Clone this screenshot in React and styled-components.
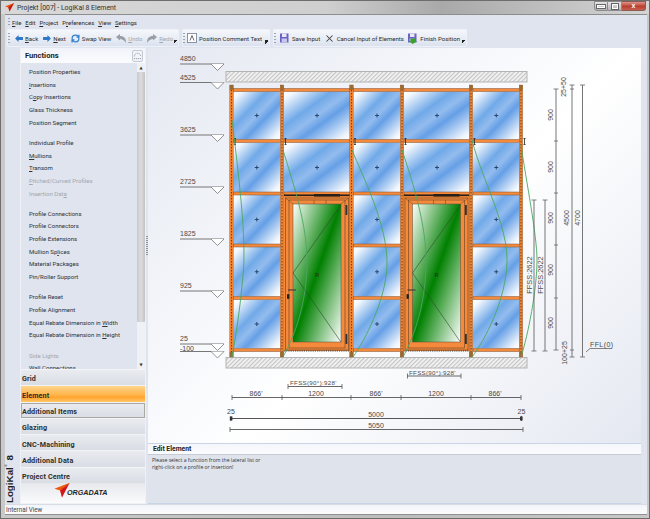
import React from "react";
import styled, { createGlobalStyle } from "styled-components";
import { RefreshCw, X } from "lucide-react";

const Global = createGlobalStyle`
  html, body { margin: 0; padding: 0; overflow: hidden; }
  body { font-family: Roboto, "Liberation Sans", sans-serif; color: #2c2c2c; }
`;

// "&" marks the mnemonic letter, it comes out underlined
function Mn({ text }) {
  const i = text.indexOf("&");
  if (i < 0) return <span>{text}</span>;
  return (
    <span>
      {text.slice(0, i)}
      <u>{text[i + 1]}</u>
      {text.slice(i + 2)}
    </span>
  );
}

const groups = [
  [["Position Properties"], ["&Insertions"], ["C&opy Insertions"], ["Glass Thickness"], ["Position Segment"]],
  [["Individual Profile"], ["&Mullions"], ["&Transom"], ["&Pitched/Curved Profiles", true], ["Insertion Dat&a", true]],
  [["Profile Connections"], ["Profile Connectors"], ["Profile Extensions"], ["Mullion Sp&lices"], ["Material Packages"], ["Pin/Roller Support"]],
  [["Profile Reset"], ["Profile Alignment"], ["Equal Rebate Dimension in &Width"], ["Equal Rebate Dimension in &Height"]],
  [["Side Lights", true], ["Wall Connections"]],
];

const navItems = ["Grid", "Element", "Additional Items", "Glazing", "CNC-Machining", "Additional Data", "Project Centre"];

export default function App() {
  return (
    <Window>
      <Global />
      <TitleBar>
        <svg width="9" height="9" viewBox="0 0 16 16">
          <polygon points="16,0 0,6 6,8 8,15" fill="#e8500f" />
          <polygon points="16,0 6,8 8,15" fill="#c81414" />
        </svg>
        <TitleText>Projekt [007] - LogiKal 8 Element</TitleText>
        <WinControls>
          <WinBtn><i /></WinBtn>
          <WinBtn $max><i /></WinBtn>
          <CloseBtn>x</CloseBtn>
        </WinControls>
      </TitleBar>

      <Client>
        <MenuBar>
          <Grip />
          {["&File", "&Edit", "&Project", "P&references", "&View", "&Settings"].map((m) => (
            <MenuItem key={m}><Mn text={m} /></MenuItem>
          ))}
        </MenuBar>

        <ToolRow>
          <ToolGroup $w={172} $pad={8} $gap={5}>
            <Tool><ArrowIcon /><Mn text="&Back" /></Tool>
            <Tool><ArrowIcon $right /><Mn text="&Next" /></Tool>
            <Tool><RefreshCw size={9} color="#2f7fd0" strokeWidth={3.4} />Swap View</Tool>
            <Tool $off><UndoIcon /><Mn text="&Undo" /></Tool>
            <Tool $off><UndoIcon $flip /><Mn text="&Redo" /></Tool>
            <More />
          </ToolGroup>
          <ToolGroup $w={88} $pad={5} $gap={5}>
            <Tool>
              <svg width="10" height="10" viewBox="0 0 10 10">
                <rect x="0.5" y="0.5" width="9" height="9" fill="#fff" stroke="#8a93a3" />
                <path d="M3 7.5 L5 2.5 L7 7.5" fill="none" stroke="#667" />
              </svg>
              Position Comment Text
            </Tool>
            <More />
          </ToolGroup>
          <ToolGroup $w={194} $pad={6} $gap={3.5}>
            <Tool><DiskIcon />Save Input</Tool>
            <Tool><X size={11} color="#444" strokeWidth={2.2} />Cancel Input of Elements</Tool>
            <Tool><DiskIcon $finish />Finish Position</Tool>
            <More />
          </ToolGroup>
        </ToolRow>

        <Body>
          <Strip>
            <StripLabel>LogiKal<sup>®</sup> 8</StripLabel>
          </Strip>

          <SidePanel>
            <PanelHead>
              Functions
              <HeadBtn>
                <svg width="9" height="9" viewBox="0 0 10 10">
                  <path d="M1.5 6 A3.5 3.5 0 0 1 8.5 6 M1 8.5 H9" fill="none" stroke="#8c95a5" strokeDasharray="1.4 .8" />
                </svg>
              </HeadBtn>
            </PanelHead>
            <ListArea>
              <FuncList>
                {groups.map((g, i) => (
                  <FuncGroup key={i}>
                    {g.map(([label, off]) => (
                      <FuncItem key={label} $off={off}><Mn text={label} /></FuncItem>
                    ))}
                  </FuncGroup>
                ))}
              </FuncList>
              <ScrollBar>
                <ScrollArrow>▲</ScrollArrow>
                <ScrollThumb />
                <ScrollArrow>▼</ScrollArrow>
              </ScrollBar>
            </ListArea>
            <NavList>
              {navItems.map((n) => (
                <NavButton key={n} $active={n === "Element"} $hover={n === "Additional Items"}>{n}</NavButton>
              ))}
            </NavList>
            <LogoBox>
              <svg width="17" height="15" viewBox="0 0 17 16">
                <polygon points="0,6 16,0 10,5" fill="#f08a12" />
                <polygon points="16,0 10,5 8,15 6,8 0,6" fill="#ea5a10" />
                <polygon points="16,0 6,8 8,15.5" fill="#d6141c" />
              </svg>
              <LogoText>ORGADATA</LogoText>
            </LogoBox>
          </SidePanel>

          <Splitter><SplitGrip /></Splitter>

          <MainCol>
            <Canvas><Drawing /></Canvas>
            <EditPanel>
              <EditHead>Edit Element</EditHead>
              <EditBody>
                Please select a function from the lateral list or
                <br />
                right-click on a profile or insertion!
              </EditBody>
            </EditPanel>
          </MainCol>
        </Body>

        <StatusBar>Internal View</StatusBar>
      </Client>
    </Window>
  );
}

/* ---------- toolbar icons ---------- */

function ArrowIcon({ $right }) {
  return (
    <svg width="8" height="7" viewBox="0 0 9 8" style={{ transform: $right ? "scaleX(-1)" : "none" }}>
      <polygon points="0,4 4,0 4,2.2 9,2.2 9,5.8 4,5.8 4,8" fill="#2e78c8" />
    </svg>
  );
}

function UndoIcon({ $flip }) {
  return (
    <svg width="10" height="9" viewBox="0 0 10 9" style={{ transform: $flip ? "scaleX(-1)" : "none" }}>
      <path d="M0 3 L4 0 L4 2 C8 2 10 4 10 9 C8 6 6 5 4 5 L4 6.5 Z" fill="#9a9ea6" />
    </svg>
  );
}

function DiskIcon({ $finish }) {
  return (
    <svg width="11" height="11" viewBox="0 0 11 11">
      <rect x="1" y="0.5" width="8.5" height="9" fill="#6a62c4" />
      <rect x="3" y="0.5" width="4.5" height="3.5" fill="#e8e8f4" />
      <rect x="2.6" y="5.5" width="5.4" height="4" fill="#c9c6ec" />
      {$finish && <polygon points="3.5,5.5 8,5.5 8,8 10,8 5.8,11 1.5,8 3.5,8" fill="#3aa12e" />}
    </svg>
  );
}

/* ---------- the element drawing ---------- */

const mullX = [231.5, 282, 351.5, 402, 471, 521];
const tranY = [90, 141, 193.5, 245.5, 298, 350];
const labelFill = "#4a4a4a";

function Glass({ x, y, w, h }) {
  return (
    <g>
      <rect x={x} y={y} width={w} height={h} fill="url(#blueGlass)" />
      <path d={`M${x + w / 2 - 2} ${y + h / 2} h4 M${x + w / 2} ${y + h / 2 - 2} v4`} stroke="#1e3d66" strokeWidth="0.9" />
    </g>
  );
}

function Door({ x }) {
  const gx = x + 9;
  const gw = 48;
  return (
    <g>
      <rect x={x} y={195} width={66} height={156} fill="#f58a3c" />
      <rect x={x} y={194.5} width={66} height={1.6} fill="#2a2018" />
      <rect x={x + 1.5} y={198} width={63} height={152} fill="none" stroke="#7a4a26" strokeWidth="0.7" />
      <rect x={x + 5} y={200} width={56} height={148} fill="none" stroke="#7a4a26" strokeWidth="0.7" />
      <path d={`M${x + 1.5} 198 L${gx} 204 M${x + 64.5} 198 L${gx + gw} 204 M${x + 30} 200 v4 M${x + 42} 200 v4`} stroke="#7a4a26" strokeWidth="0.6" />
      <rect x={x + 30} y={194} width={26} height={2.6} fill="#2a2018" />
      <rect x={gx} y={204} width={gw} height={138} fill="url(#greenGlass)" stroke="#5b4a38" strokeWidth="0.5" />
      <path d={`M${gx + gw} 205 L${gx} 273 L${gx + gw} 342`} fill="none" stroke="#2f4a2f" strokeWidth="0.6" />
      <text x={gx + 24} y={277} fontSize="5.5" fontWeight="700" textAnchor="middle" fill="#1e3d1e">R</text>
      <path d={`M${x + 4} 290 h8`} stroke="#333" strokeWidth="1" />
      <rect x={x + 3} y={294} width={2.4} height={5} rx="1" fill="#222" />
      <rect x={x + 61.5} y={205} width={1.8} height={10} fill="#333" />
      <rect x={x + 61.5} y={334} width={1.8} height={10} fill="#333" />
      <path d={`M${x} 351 h66`} stroke="#222" strokeWidth="0.8" strokeDasharray="1.2 1" />
    </g>
  );
}

function Level({ y, label, dy = 3 }) {
  return (
    <g>
      <text x="180" y={y - dy} fontSize="7" fill={labelFill}>{label}</text>
      <path d={`M180 ${y} H224`} stroke="#777" strokeWidth="1.2" />
      <path d={`M211 ${y} L217.5 ${y + 6.5} L224 ${y}`} fill="#fff" stroke="#666" strokeWidth="0.7" />
    </g>
  );
}

function VDim({ x, y1, y2, ticks = [] }) {
  return (
    <g stroke="#666">
      <path d={`M${x} ${y1} V${y2}`} strokeWidth="0.9" />
      <path d={`M${x - 2.5} ${y1} h5 M${x - 2.5} ${y2} h5`} strokeWidth="0.8" />
      {ticks.map((t) => <path key={t} d={`M${x - 2} ${t} h4`} strokeWidth="0.8" />)}
    </g>
  );
}

function VText({ x, y, children, size = 7 }) {
  return (
    <text x={x} y={y} fontSize={size} fill={labelFill} textAnchor="middle" transform={`rotate(-90 ${x} ${y})`}>
      {children}
    </text>
  );
}

function HDim({ y, x1, x2, ticks = [], w = 0.9 }) {
  return (
    <g stroke="#555">
      <path d={`M${x1} ${y} H${x2}`} strokeWidth={w} />
      {[x1, x2, ...ticks].map((t) => <path key={t} d={`M${t} ${y - 2.5} v5`} strokeWidth="0.8" />)}
    </g>
  );
}

function HText({ x, y, children, anchor = "middle" }) {
  return <text x={x} y={y} fontSize="7" fill={labelFill} textAnchor={anchor}>{children}</text>;
}

const swings = [
  "M232 120 C238 170 247 240 243 275 C240 310 236 335 232 357",
  "M283 150 C292 180 308 225 307 265 C306 310 292 340 283 357",
  "M352 150 C362 175 388 225 387 265 C386 300 365 340 353 357",
  "M402 150 C412 180 427 225 426 265 C425 310 412 340 403 357",
  "M472 140 C482 180 508 225 507 262 C506 300 485 340 472 357",
  "M521 145 C526 180 537 235 537 260 C537 290 528 335 521 357",
];

function Drawing() {
  const colX = [
    [233.5, 46.5],
    [284, 66],
    [353.5, 47],
    [404, 66],
    [473, 46.5],
  ];
  return (
    <svg width="493" height="394" viewBox="148 48 493 394" style={{ display: "block" }} fontFamily="'Liberation Sans', sans-serif">
      <defs>
        <linearGradient id="blueGlass" x1="0" y1="0" x2="1" y2="1">
          <stop offset="0" stopColor="#ffffff" />
          <stop offset="0.08" stopColor="#f4f8fd" />
          <stop offset="0.36" stopColor="#70a9e8" />
          <stop offset="0.5" stopColor="#93bcee" />
          <stop offset="0.62" stopColor="#659fe6" />
          <stop offset="0.92" stopColor="#f0f6fd" />
          <stop offset="1" stopColor="#ffffff" />
        </linearGradient>
        <linearGradient id="greenGlass" x1="0" y1="0" x2="1" y2="1">
          <stop offset="0" stopColor="#ffffff" />
          <stop offset="0.5" stopColor="#008000" />
          <stop offset="1" stopColor="#ffffff" />
        </linearGradient>
        <pattern id="hatch" width="3" height="3" patternUnits="userSpaceOnUse" patternTransform="rotate(45)">
          <rect width="3" height="3" fill="#f4f4f4" />
          <rect width="1.2" height="3" fill="#c4c4c4" />
        </pattern>
      </defs>

      <rect x="226" y="71.5" width="301" height="10.5" fill="url(#hatch)" stroke="#b4b4b4" />
      <rect x="226" y="357.5" width="301" height="10.5" fill="url(#hatch)" stroke="#b4b4b4" />

      {colX.map(([x, w], c) =>
        [[91.5, 48], [143, 49], [195, 49], [247, 49.5], [300, 48]].map(([y, h], r) =>
          (c === 1 || c === 3) && r > 1 ? null : <Glass key={`${c}-${r}`} x={x} y={y} w={w} h={h} />
        )
      )}

      {tranY.map((y) =>
        [[233, 280.5], [284, 350], [353, 400.5], [404, 469.5], [473, 519.5]].map(([a, b], i) =>
          (i === 1 || i === 3) && y > 200 ? null : (
            <rect key={`${y}-${i}`} x={a} y={y - 1.5} width={b - a} height={3} fill="#f58a3c" stroke="#7a5236" strokeWidth="0.5" />
          )
        )
      )}

      <Door x={284} />
      <Door x={403.5} />

      {mullX.map((x) => (
        <g key={x}>
          <rect x={x - 1.7} y="85" width="3.4" height="272" fill="#f0832f" stroke="#7a5236" strokeWidth="0.4" />
          <rect x={x - 1.7} y="85" width="3.4" height="5" fill="#9a6a30" />
          <rect x={x - 1.7} y="352" width="3.4" height="5" fill="#9a6a30" />
          <path d={`M${x} 90 V352`} stroke="#4a3020" strokeWidth="0.8" strokeDasharray="1.4 1.6" />
          <path d={`M${x + 3.5} 138.5 v6 M${x + 2.5} 138.5 h2 M${x + 2.5} 144.5 h2`} stroke="#222" strokeWidth="0.8" />
        </g>
      ))}

      {swings.map((d) => (
        <path key={d} d={d} fill="none" stroke="#4aa862" strokeWidth="0.9" />
      ))}

      <Level y={64} label="4850" />
      <Level y={82.5} label="4525" />
      <Level y={135} label="3625" />
      <Level y={187} label="2725" />
      <Level y={239} label="1825" />
      <Level y={291} label="925" />
      <Level y={344} label="25" />
      <Level y={351.5} label="" />
      <HText x={180} y={350.5} anchor="start">-100</HText>

      <VDim x={534} y1={200} y2={351} />
      <VDim x={545} y1={200} y2={351} />
      <VDim x={556} y1={89} y2={350} ticks={[141, 193, 245, 298]} />
      <VDim x={572} y1={85} y2={357} ticks={[89, 350]} />
      <VDim x={582.5} y1={85} y2={357} />

      <VText x={566} y={87}>25+50</VText>
      {[115, 167, 218, 270, 323].map((y) => <VText key={y} x={553} y={y}>900</VText>)}
      <VText x={569} y={218}>4500</VText>
      <VText x={580} y={218}>4700</VText>
      <VText x={532} y={275} size={7.4}>FFSS:2622</VText>
      <VText x={543} y={275} size={7.4}>FFSS:2622</VText>
      <VText x={567} y={353}>100+25</VText>

      <text x="590" y="347" fontSize="7" fill={labelFill} letterSpacing="0.4">FFL(0)</text>
      <path d="M586 352 L590 348.5 H612" fill="none" stroke="#666" strokeWidth="0.8" />

      <HDim y={386.5} x1={288} x2={342} />
      <text x="290" y="385" fontSize="6.2" fill={labelFill} letterSpacing="0.3">FFSS(90°):928'</text>
      <HDim y={376} x1={407.5} x2={461} />
      <text x="409" y="374.5" fontSize="6.2" fill={labelFill} letterSpacing="0.3">FFSS(90°):928'</text>

      <HDim y={397.5} x1={232} x2={521} ticks={[282, 351, 401, 471]} />
      <HText x={256} y={396}>866'</HText>
      <HText x={316} y={396}>1200</HText>
      <HText x={376} y={396}>866'</HText>
      <HText x={436} y={396}>1200</HText>
      <HText x={495} y={396}>866'</HText>

      <HDim y={418.5} x1={231} x2={521.5} w={1.1} />
      <rect x="229.8" y="416.5" width="2.6" height="4" fill="#333" />
      <rect x="520" y="416.5" width="2.6" height="4" fill="#333" />
      <HText x={231} y={414}>25</HText>
      <HText x={521.5} y={414}>25</HText>
      <HText x={376} y={417}>5000</HText>
      <HDim y={429.5} x1={230} x2={523} />
      <HText x={376} y={428}>5050</HText>
    </svg>
  );
}

/* ---------- styles ---------- */

const Window = styled.div`
  width: 650px;
  height: 519px;
  display: flex;
  flex-direction: column;
  box-sizing: border-box;
  border: 1px solid #6d6d6d;
  padding: 0 2px 3px 4px;
  background: linear-gradient(90deg, #c9c9c9 0, #bdbdbd 60%, #c8c8c8 100%);
  overflow: hidden;
`;

const TitleBar = styled.div`
  height: 13px;
  flex: none;
  display: flex;
  align-items: center;
  gap: 3px;
  box-sizing: border-box;
  background: linear-gradient(90deg, #d8d8d8 0, #cfcfcf 50%, #a9a9a9 68%, #d4d4d4 100%);
  margin: 0 -2px 0 -4px;
  padding-left: 4px;
`;

const TitleText = styled.span`
  font-size: 6.9px;
  color: #303030;
`;

const WinControls = styled.div`
  margin-left: auto;
  margin-right: 3px;
  margin-top: -3px;
  display: flex;
  height: 10px;
`;

const WinBtn = styled.div`
  width: 14px;
  height: 10px;
  box-sizing: border-box;
  border: 1px solid #8a8a8a;
  border-left-width: 0;
  background: linear-gradient(#e6e6e6, #b5b5b5);
  display: flex;
  align-items: center;
  justify-content: center;
  &:first-child { border-left-width: 1px; border-radius: 0 0 0 3px; }
  i {
    display: block;
    width: ${(p) => (p.$max ? "4px" : "6px")};
    height: ${(p) => (p.$max ? "3px" : "1px")};
    border: 1px solid #fff;
    outline: 1px solid #666;
  }
`;

const CloseBtn = styled.div`
  width: 24px;
  height: 10px;
  box-sizing: border-box;
  border: 1px solid #8a5a55;
  border-left-width: 0;
  border-radius: 0 0 3px 0;
  background: linear-gradient(#e0938a, #b8402f 55%, #c8604f);
  color: #fff;
  font: 700 7px/8px "Liberation Sans", sans-serif;
  text-align: center;
`;

const Client = styled.div`
  flex: 1;
  min-height: 0;
  display: flex;
  flex-direction: column;
  background: #dfe4ee;
  border-top: 1px solid #8d8d8d;
`;

const MenuBar = styled.div`
  height: 14px;
  flex: none;
  display: flex;
  align-items: center;
  padding-left: 3px;
`;

const Grip = styled.div`
  width: 2px;
  height: 9px;
  margin-right: 2px;
  background: repeating-linear-gradient(#9aa3b4 0 1px, transparent 1px 3px);
`;

const MenuItem = styled.span`
  font-size: 6px;
  margin-right: 3.9px;
  color: #2a2a2a;
`;

const ToolRow = styled.div`
  height: 19px;
  flex: none;
  display: flex;
  gap: 3px;
  padding-left: 2px;
`;

const ToolGroup = styled.div`
  position: relative;
  width: ${(p) => p.$w}px;
  height: 18px;
  box-sizing: border-box;
  display: flex;
  align-items: center;
  gap: ${(p) => p.$gap}px;
  padding-left: ${(p) => p.$pad}px;
  border-radius: 2px;
  background: linear-gradient(#f6f8fc, #e6ebf4 60%, #d9e0ed);
  box-shadow: inset 0 0 0 1px #eef1f7;
  &::before {
    content: "";
    position: absolute;
    left: 1px;
    top: 4px;
    width: 2px;
    height: 10px;
    background: repeating-linear-gradient(#9aa3b4 0 1px, transparent 1px 3px);
  }
`;

const Tool = styled.span`
  display: inline-flex;
  align-items: center;
  gap: 2px;
  font-size: 6.05px;
  white-space: nowrap;
  color: ${(p) => (p.$off ? "#a3a7ae" : "#2c2c2c")};
`;

const More = styled.span`
  position: absolute;
  right: 2px;
  bottom: 3px;
  width: 3px;
  height: 3px;
  border-top: 1px solid #222;
  background: linear-gradient(135deg, #222 50%, transparent 50%);
`;

const Body = styled.div`
  flex: 1;
  min-height: 0;
  display: flex;
`;

const Strip = styled.div`
  width: 15px;
  flex: none;
  display: flex;
  align-items: flex-end;
  padding-bottom: 1px;
`;

const StripLabel = styled.div`
  writing-mode: vertical-rl;
  transform: rotate(180deg);
  font: 700 9.8px/10px "Liberation Sans", sans-serif;
  color: #1d1d1d;
  white-space: nowrap;
  sup { font-size: 3.5px; line-height: 0; }
`;

const SidePanel = styled.div`
  width: 126px;
  flex: none;
  display: flex;
  flex-direction: column;
  border: 1px solid #eef1f6;
  border-width: 0 1px 1px 1px;
  box-sizing: border-box;
`;

const PanelHead = styled.div`
  height: 15px;
  flex: none;
  display: flex;
  align-items: center;
  justify-content: space-between;
  padding: 0 2px 0 4px;
  font-size: 7.6px;
  font-weight: 700;
  color: #1c1c1c;
  background: linear-gradient(#f0f3f9, #fbfcfe);
`;

const HeadBtn = styled.div`
  width: 11px;
  height: 12px;
  box-sizing: border-box;
  border: 1px solid #c2c9d5;
  border-radius: 2px;
  background: #f2f4f8;
  display: flex;
  align-items: center;
  justify-content: center;
`;

const ListArea = styled.div`
  flex: 1;
  min-height: 0;
  display: flex;
  overflow: hidden;
  background: #dfe4ee;
`;

const FuncList = styled.div`
  flex: 1;
  overflow: hidden;
  padding: 3px 0 0 8px;
  display: flex;
  flex-direction: column;
  gap: 7.6px;
`;

const FuncGroup = styled.div`
  display: flex;
  flex-direction: column;
`;

const FuncItem = styled.div`
  height: 12.67px;
  line-height: 12.67px;
  font-size: 6.05px;
  white-space: nowrap;
  color: ${(p) => (p.$off ? "#a2a7b0" : "#2f3238")};
`;

const ScrollBar = styled.div`
  width: 8px;
  flex: none;
  display: flex;
  flex-direction: column;
  background: #eef1f6;
`;

const ScrollArrow = styled.div`
  height: 9px;
  font: 4px/9px "DejaVu Sans", sans-serif;
  text-align: center;
  color: #333;
`;

const ScrollThumb = styled.div`
  height: 250px;
  margin-bottom: auto;
  background: linear-gradient(90deg, #c9c9c9, #dddddd 50%, #c2c2c2);
  border-radius: 1px;
`;

const NavList = styled.div`
  flex: none;
  display: flex;
  flex-direction: column;
`;

const NavButton = styled.div`
  height: 16.3px;
  box-sizing: border-box;
  padding: 2.5px 0 0 1px;
  line-height: 13px;
  font-size: 7.2px;
  font-weight: 700;
  letter-spacing: 0.12px;
  color: #2e2e2e;
  border-top: 1px solid #f2f4f8;
  background: ${(p) =>
    p.$active
      ? "linear-gradient(#ffd58c, #ffb54c 55%, #ffa42e 70%, #ffc868)"
      : "linear-gradient(#e9ebef, #d9dde4)"};
  ${(p) => p.$hover && "box-shadow: inset 0 0 0 1px #a9a9a2;"}
`;

const LogoBox = styled.div`
  height: 20px;
  flex: none;
  display: flex;
  align-items: flex-start;
  padding-left: 33px;
  background: linear-gradient(#e6e8ec, #fbfbfc);
`;

const LogoText = styled.span`
  margin: 5px 0 0 -4px;
  font: italic 700 7.2px "Liberation Sans", sans-serif;
  color: #1f1f1f;
`;

const Splitter = styled.div`
  width: 2px;
  flex: none;
  display: flex;
  align-items: center;
  padding-bottom: 60px;
  box-sizing: border-box;
`;

const SplitGrip = styled.div`
  width: 2px;
  height: 20px;
  background: repeating-linear-gradient(#8c95a5 0 1px, transparent 1px 2px);
`;

const MainCol = styled.div`
  width: 493px;
  flex: none;
  display: flex;
  flex-direction: column;
`;

const Canvas = styled.div`
  height: 395px;
  flex: none;
  background: linear-gradient(135deg, #e4e8f1 0, #fbfcfe 48%, #ffffff 55%, #e4e8f1 100%);
`;

const EditPanel = styled.div`
  flex: 1;
  display: flex;
  flex-direction: column;
  border-top: 1px solid #c9d4e8;
`;

const EditHead = styled.div`
  height: 10px;
  flex: none;
  line-height: 10px;
  padding-left: 5px;
  font-size: 6.8px;
  font-weight: 700;
  background: linear-gradient(#f4f6fa, #fbfcfe);
  color: #222;
`;

const EditBody = styled.div`
  flex: 1;
  padding: 2px 0 0 4px;
  font-family: "Open Sans", sans-serif;
  font-size: 5.1px;
  line-height: 7px;
  color: #333;
  background: #dfe3ec;
  border-bottom: 1px solid #c9d4e8;
  border-top: 1px solid #c6cbd5;
`;

const StatusBar = styled.div`
  height: 11px;
  flex: none;
  box-sizing: border-box;
  padding-left: 1px;
  line-height: 10px;
  font-size: 6.3px;
  color: #444;
  background: linear-gradient(#f2f4f8, #fcfcfd);
  border-top: 1px solid #d7dce6;
  border-bottom: 1px solid #8f8f8f;
`;
